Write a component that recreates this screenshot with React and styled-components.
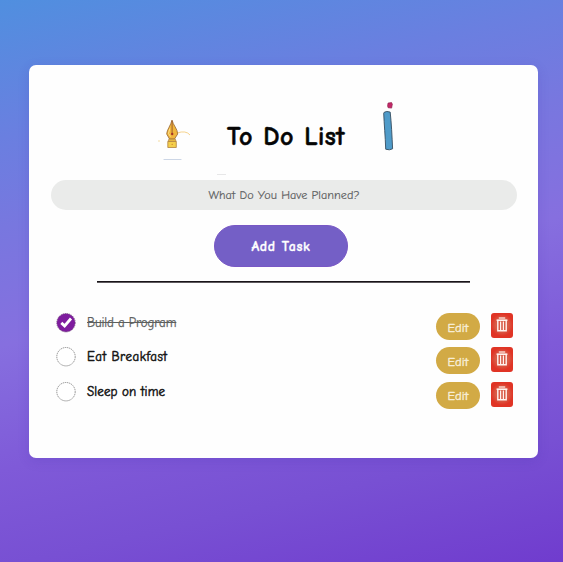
import React, { useState } from "react";
import styled, { createGlobalStyle } from "styled-components";

const GlobalStyle = createGlobalStyle`
  * { box-sizing: border-box; }
  body {
    margin: 0;
    font-family: "Comic Sans MS", "Comic Neue", Inter, sans-serif;
    font-feature-settings: "cv11";
  }
  button, input { font: inherit; font-feature-settings: inherit; }
`;

const Page = styled.main`
  width: 563px;
  height: 562px;
  padding: 65px 25px 104px 29px;
  overflow: hidden;
  background: linear-gradient(167deg, #508fdf 0%, #6a7fe0 20%, #7877df 33%, #866fdf 50%, #7f5ad8 68%, #7850d3 82%, #703cce 100%);
`;

const Card = styled.section`
  height: 393px;
  padding: 0 21px 0 22px;
  background: #fefefe;
  border-radius: 7px;
  box-shadow: 0 3px 12px rgba(65, 45, 170, 0.16);
  display: flex;
  flex-direction: column;
  align-items: center;
`;

const Header = styled.header`
  align-self: stretch;
  height: 107px;
  padding: 34px 121px 0 102px;
  display: flex;
  justify-content: space-between;
`;

const Title = styled.h1`
  margin: 22px 3px 0 2px;
  font-size: 26px;
  line-height: 32px;
  font-weight: 700;
  letter-spacing: 0.35px;
  word-spacing: 1px;
  white-space: nowrap;
  color: #050505;
  -webkit-text-stroke: 0.5px #050505;
`;

const PenMark = styled.div`
  align-self: flex-start;
  width: 9px;
  height: 1px;
  flex: none;
  margin: 2px 0 5px 166px;
  background: #e7e7e8;
`;

const TaskInput = styled.input`
  width: 466px;
  height: 30px;
  flex: none;
  padding: 0;
  border: 0;
  border-radius: 15px;
  background: #eaebea;
  text-align: center;
  font-size: 12.2px;
  letter-spacing: 0.03px;
  &::placeholder {
    color: #5d6061;
    opacity: 1;
    -webkit-text-stroke: 0.15px #5d6061;
  }
`;

const AddButton = styled.button`
  width: 134px;
  height: 42px;
  flex: none;
  margin: 15px 6px 0 0;
  padding: 1px 0 0;
  border: 1px solid #7857c5;
  border-radius: 21px;
  background: #745fc6;
  color: #fff;
  font-size: 14px;
  font-weight: 700;
  letter-spacing: 0.65px;
  word-spacing: 0.5px;
  -webkit-text-stroke: 0.3px #fff;
`;

const Divider = styled.hr`
  width: 373px;
  height: 2px;
  flex: none;
  margin: 14px 1px 0 0;
  border: 0;
  background: linear-gradient(#191519 50%, #5d595d 50%);
`;

const TaskList = styled.ul`
  align-self: stretch;
  margin: 30px 0 0;
  padding: 0 4px 0 5px;
  list-style: none;
`;

const TaskRow = styled.li`
  height: 34.4px;
  display: flex;
  align-items: flex-start;
`;

const Check = styled.button`
  width: 20px;
  height: 20px;
  padding: 0;
  border: 0;
  background: none;
  svg { display: block; }
`;

const TaskName = styled.span`
  flex: 1;
  margin-left: 11px;
  font-size: 13px;
  line-height: 19px;
  font-weight: 500;
  letter-spacing: ${(p) => p.$spacing}px;
  color: ${(p) => (p.$done ? "#5d605e" : "#171717")};
  text-decoration: ${(p) => (p.$done ? "line-through" : "none")};
  -webkit-text-stroke: ${(p) => (p.$done ? "0.25px" : "0.5px")} currentColor;
`;

const EditButton = styled.button`
  width: 44px;
  height: 27px;
  padding: 2px 0 0;
  border: 0;
  border-radius: 14px;
  background: #d2aa45;
  color: #f8eed8;
  font-size: 12.5px;
  font-weight: 500;
  letter-spacing: 0.15px;
  -webkit-text-stroke: 0.4px #f8eed8;
`;

const DeleteButton = styled.button`
  width: 22px;
  height: 25px;
  margin-left: 11px;
  padding: 0;
  border: 0;
  border-radius: 3px;
  background: radial-gradient(circle at 50% 48%, #d85b46 0 38%, #e03425 65%);
  svg { display: block; margin: -2px auto 0; }
`;

const PenIcon = () => (
  <svg width="40" height="64" viewBox="0 0 40 64" aria-hidden="true">
    <path d="M24 34Q33 31 37 36" fill="none" stroke="#f6d38d" strokeWidth="1" />
    <circle cx="6" cy="42" r=".7" fill="#f1cf80" />
    <path d="M19 21C18 26 13.7 31 13.7 35L16.5 40h5l3.2-5C24.7 30 20 26 19 21Z" fill="#f0b63e" stroke="#986735" strokeWidth=".8" />
    <path d="M19.1 22v12.5" stroke="#955529" strokeWidth=".9" />
    <path d="M16.8 29.5l-1.3 5 2 3" fill="none" stroke="#ffe28c" strokeWidth="1" />
    <circle cx="19.2" cy="35" r="1.2" fill="#a53529" />
    <path d="M15.8 40.2h6.6l.7 2.2h-8Z" fill="#eab942" stroke="#a27531" strokeWidth=".6" />
    <path d="M14.8 42.5h8.5v6h-8.5Z" fill="#f4cf4b" stroke="#b2813e" strokeWidth=".8" />
    <circle cx="19.2" cy="45.4" r=".7" fill="#d98c2e" />
    <path d="M11 60.5h17" stroke="#ccd6e6" strokeWidth="1.1" strokeLinecap="round" />
  </svg>
);

const CrayonIcon = () => (
  <svg width="16" height="56" viewBox="0 0 16 56" aria-hidden="true">
    <path d="M8 4.1l3.6-.5.7 1.6-.7 3.9-3.5-.4-.5-1.8Z" fill="#c42769" stroke="#90264f" strokeWidth=".7" />
    <path d="M4.2 13.3Q6.5 11.7 10.2 13.1C11.4 24 12 37 12.6 49.8Q9.5 51.6 5.7 50.2C5.3 37 4.1 25 3.7 14.2Z" fill="#4f9bc9" stroke="#354e61" strokeWidth=".9" />
  </svg>
);

const CheckIcon = ({ done }) => (
  <svg width="20" height="20" viewBox="0 0 20 20" aria-hidden="true">
    <circle cx="10" cy="9.7" r="9.2" fill={done ? "#7e1c9e" : "#fff"} stroke={done ? "#70447a" : "#777"} strokeWidth=".8" strokeDasharray="1.4 .7" />
    {done && <path d="M5.3 9.9L8.6 12.9L15 5.5" fill="none" stroke="#fff" strokeWidth="2.8" />}
  </svg>
);

const TrashIcon = () => (
  <svg width="12" height="15" viewBox="0 0 12 15" fill="none" stroke="#fff3ef" aria-hidden="true">
    <path d="M2.8 1h6.4" strokeWidth="1.2" />
    <path d="M.6 3.2h10.8" strokeWidth="1.6" />
    <path d="M1.8 3.5v10.2h8.4V3.5" strokeWidth="1.4" />
    <path d="M4.6 4.5v8.8M7.4 4.5v8.8" strokeWidth="1.2" />
  </svg>
);

const initialTasks = [
  { name: "Build a Program", done: true, spacing: -0.12 },
  { name: "Eat Breakfast", done: false, spacing: 0.48 },
  { name: "Sleep on time", done: false, spacing: 0.12 },
];

export default function App() {
  const [tasks, setTasks] = useState(initialTasks);
  const toggle = (name) =>
    setTasks(tasks.map((t) => (t.name === name ? { ...t, done: !t.done } : t)));
  return (
    <Page>
      <GlobalStyle />
      <Card>
        <Header>
          <PenIcon />
          <Title>To Do List</Title>
          <CrayonIcon />
        </Header>
        <PenMark />
        <TaskInput placeholder="What Do You Have Planned?" />
        <AddButton>Add Task</AddButton>
        <Divider />
        <TaskList>
          {tasks.map((task) => (
            <TaskRow key={task.name}>
              <Check aria-label="Toggle task" onClick={() => toggle(task.name)}>
                <CheckIcon done={task.done} />
              </Check>
              <TaskName $done={task.done} $spacing={task.spacing}>{task.name}</TaskName>
              <EditButton>Edit</EditButton>
              <DeleteButton aria-label="Delete task"><TrashIcon /></DeleteButton>
            </TaskRow>
          ))}
        </TaskList>
      </Card>
    </Page>
  );
}
